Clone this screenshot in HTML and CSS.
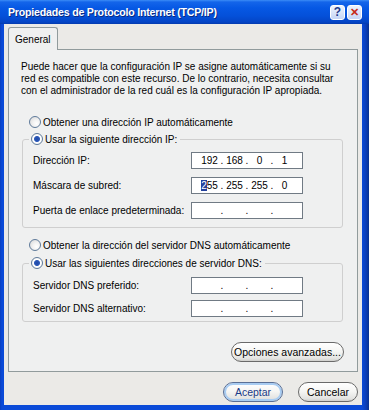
FILE: index.html
```html
<!DOCTYPE html>
<html lang="es">
<head>
    <meta charset="UTF-8">
    <title>Propiedades de Protocolo Internet (TCP/IP)</title>
    <link rel="stylesheet" href="styles.css">
</head>
<body>
    <div class="window">
        <div class="titlebar">
            <span class="title">Propiedades de Protocolo Internet (TCP/IP)</span>
            <span class="tbtn help">?</span>
            <span class="tbtn close">&#x2715;</span>
        </div>
        <div class="client">
            <div class="tabs">
                <div class="tab">General</div>
            </div>
            <div class="panel">
                <p class="intro">Puede hacer que la configuración IP se asigne automáticamente si su red es compatible con este recurso. De lo contrario, necesita consultar con el administrador de la red cuál es la configuración IP apropiada.</p>

                <div class="opt first"><span class="radio"></span>Obtener una dirección IP automáticamente</div>
                <fieldset class="group g-ip">
                    <legend class="opt"><span class="radio on"></span>Usar la siguiente dirección IP:</legend>
                    <div class="row">
                        <span>Dirección IP:</span>
                        <div class="ip"><span>192</span><i>.</i><span>168</span><i>.</i><span>0</span><i>.</i><span>1</span></div>
                    </div>
                    <div class="row">
                        <span>Máscara de subred:</span>
                        <div class="ip"><span><b class="sel">2</b>55</span><i>.</i><span>255</span><i>.</i><span>255</span><i>.</i><span>0</span></div>
                    </div>
                    <div class="row">
                        <span>Puerta de enlace predeterminada:</span>
                        <div class="ip"><span></span><i>.</i><span></span><i>.</i><span></span><i>.</i><span></span></div>
                    </div>
                </fieldset>

                <div class="opt second"><span class="radio"></span>Obtener la dirección del servidor DNS automáticamente</div>
                <fieldset class="group g-dns">
                    <legend class="opt"><span class="radio on"></span>Usar las siguientes direcciones de servidor DNS:</legend>
                    <div class="row">
                        <span>Servidor DNS preferido:</span>
                        <div class="ip"><span></span><i>.</i><span></span><i>.</i><span></span><i>.</i><span></span></div>
                    </div>
                    <div class="row">
                        <span>Servidor DNS alternativo:</span>
                        <div class="ip"><span></span><i>.</i><span></span><i>.</i><span></span><i>.</i><span></span></div>
                    </div>
                </fieldset>

                <div class="adv">
                    <a class="btn wide">Opciones avanzadas...</a>
                </div>
            </div>
            <div class="actions">
                <a class="btn default">Aceptar</a>
                <a class="btn">Cancelar</a>
            </div>
        </div>
    </div>
</body>
</html>
```

FILE: styles.css
```css
*{
    box-sizing: border-box;
    margin: 0px;
    padding: 0px;
}
body{
    background: #fff;
    font-family: "Liberation Sans", Arial, sans-serif;
    font-size: 10px;
    color: #000;
}
.window{
    width: 369px;
    height: 410px;
    display: flex;
    flex-direction: column;
    background: linear-gradient(90deg, #0a3fbf 0, #0a4ad8 2px, #0a4ad8 362px, #0b3eb8 366px, #08318f 369px);
}
.titlebar{
    height: 24px;
    display: flex;
    align-items: center;
    padding: 0 7px 0 8px;
    background: linear-gradient(#3b8cf7 0, #1465ea 2px, #0658e4 8px, #0450d9 16px, #0445c6 22px, #043aae 24px);
}
.title{
    flex: 1;
    color: #fff;
    font-weight: bold;
    font-size: 10.6px;
    letter-spacing: -0.2px;
    text-shadow: 1px 1px 0 #0a2a80;
}
.tbtn{
    width: 15px;
    height: 15px;
    border: 1px solid #fff;
    border-radius: 3px;
    background: linear-gradient(#eef3fd, #c6d6f6);
    display: flex;
    align-items: center;
    justify-content: center;
    font-weight: bold;
    font-size: 12px;
    line-height: 1;
}
.help{
    color: #1d3a8c;
    margin-right: 2px;
}
.close{
    color: #c62c1a;
    font-size: 11px;
}
.client{
    flex: 1;
    margin: 0 7px 5px 4px;
    padding: 3px 4px 0 4px;
    background: #ebeae7;
    display: flex;
    flex-direction: column;
}
.tabs{
    display: flex;
    margin-bottom: -1px;
    z-index: 1;
}
.tab{
    width: 50px;
    height: 23px;
    padding: 6px 0 0 6px;
    border: 1px solid #919b9c;
    border-bottom: none;
    border-radius: 3px 3px 0 0;
    background: #eff0f0;
}
.panel{
    border: 1px solid #919b9c;
    background: #eff0f0;
    padding: 0 0 9px 0;
}
.intro{
    margin: 11px 14px 0 12px;
    line-height: 12px;
}
.opt{
    display: flex;
    align-items: center;
    height: 16px;
    white-space: nowrap;
}
.first{
    margin: 17px 0 0 20px;
}
.second{
    margin: 9px 0 0 20px;
}
.radio{
    width: 12px;
    height: 12px;
    margin-right: 2px;
    border: 1px solid #5e7a9a;
    border-radius: 50%;
    background: radial-gradient(circle at 65% 65%, #ffffff 0, #f2f2f2 40%, #d4d4d4 100%);
}
.radio.on{
    background: radial-gradient(circle, #1f49a6 0, #2b58b8 2.5px, #ffffff 3.5px, #ececec 100%);
}
.group{
    margin: 1px 14px 0 13px;
    padding: 1px 0 4px 10px;
    border: 1px solid #cfcfcf;
    border-radius: 3px;
}
.g-dns{
    margin-top: 2px;
    padding-top: 3px;
    padding-bottom: 1px;
}
.group legend{
    margin-left: -4px;
    padding: 0 3px 0 2px;
}
.row{
    display: grid;
    grid-template-columns: 158px 112px;
    align-items: center;
    height: 25px;
    white-space: nowrap;
}
.g-dns .row{
    height: 23px;
}
.ip{
    height: 17px;
    border: 1px solid #707a84;
    background: #fff;
    display: flex;
    align-items: center;
    padding-left: 7px;
}
.ip span{
    width: 21px;
    text-align: center;
}
.ip i{
    width: 4px;
    font-style: normal;
    text-align: center;
}
.sel{
    font-weight: normal;
    background: #23409c;
    color: #fff;
}
.adv{
    display: flex;
    justify-content: flex-end;
    margin: 20px 13px 0 0;
}
.btn{
    display: flex;
    align-items: center;
    justify-content: center;
    height: 20px;
    width: 60px;
    border: 1px solid #6a6a6a;
    border-radius: 10px;
    background: linear-gradient(#ffffff, #f6f6f4 45%, #e4e4e2 85%, #cfcfcc);
    color: #000;
    font-size: 10.5px;
    white-space: nowrap;
}
.btn.wide{
    width: 113px;
}
.btn.default{
    color: #1a3a86;
    border-color: #5a6f95;
    box-shadow: inset 0 0 0 2px #a8ccf2;
}
.actions{
    display: flex;
    justify-content: flex-end;
    gap: 15px;
    margin-top: 10px;
}
```
